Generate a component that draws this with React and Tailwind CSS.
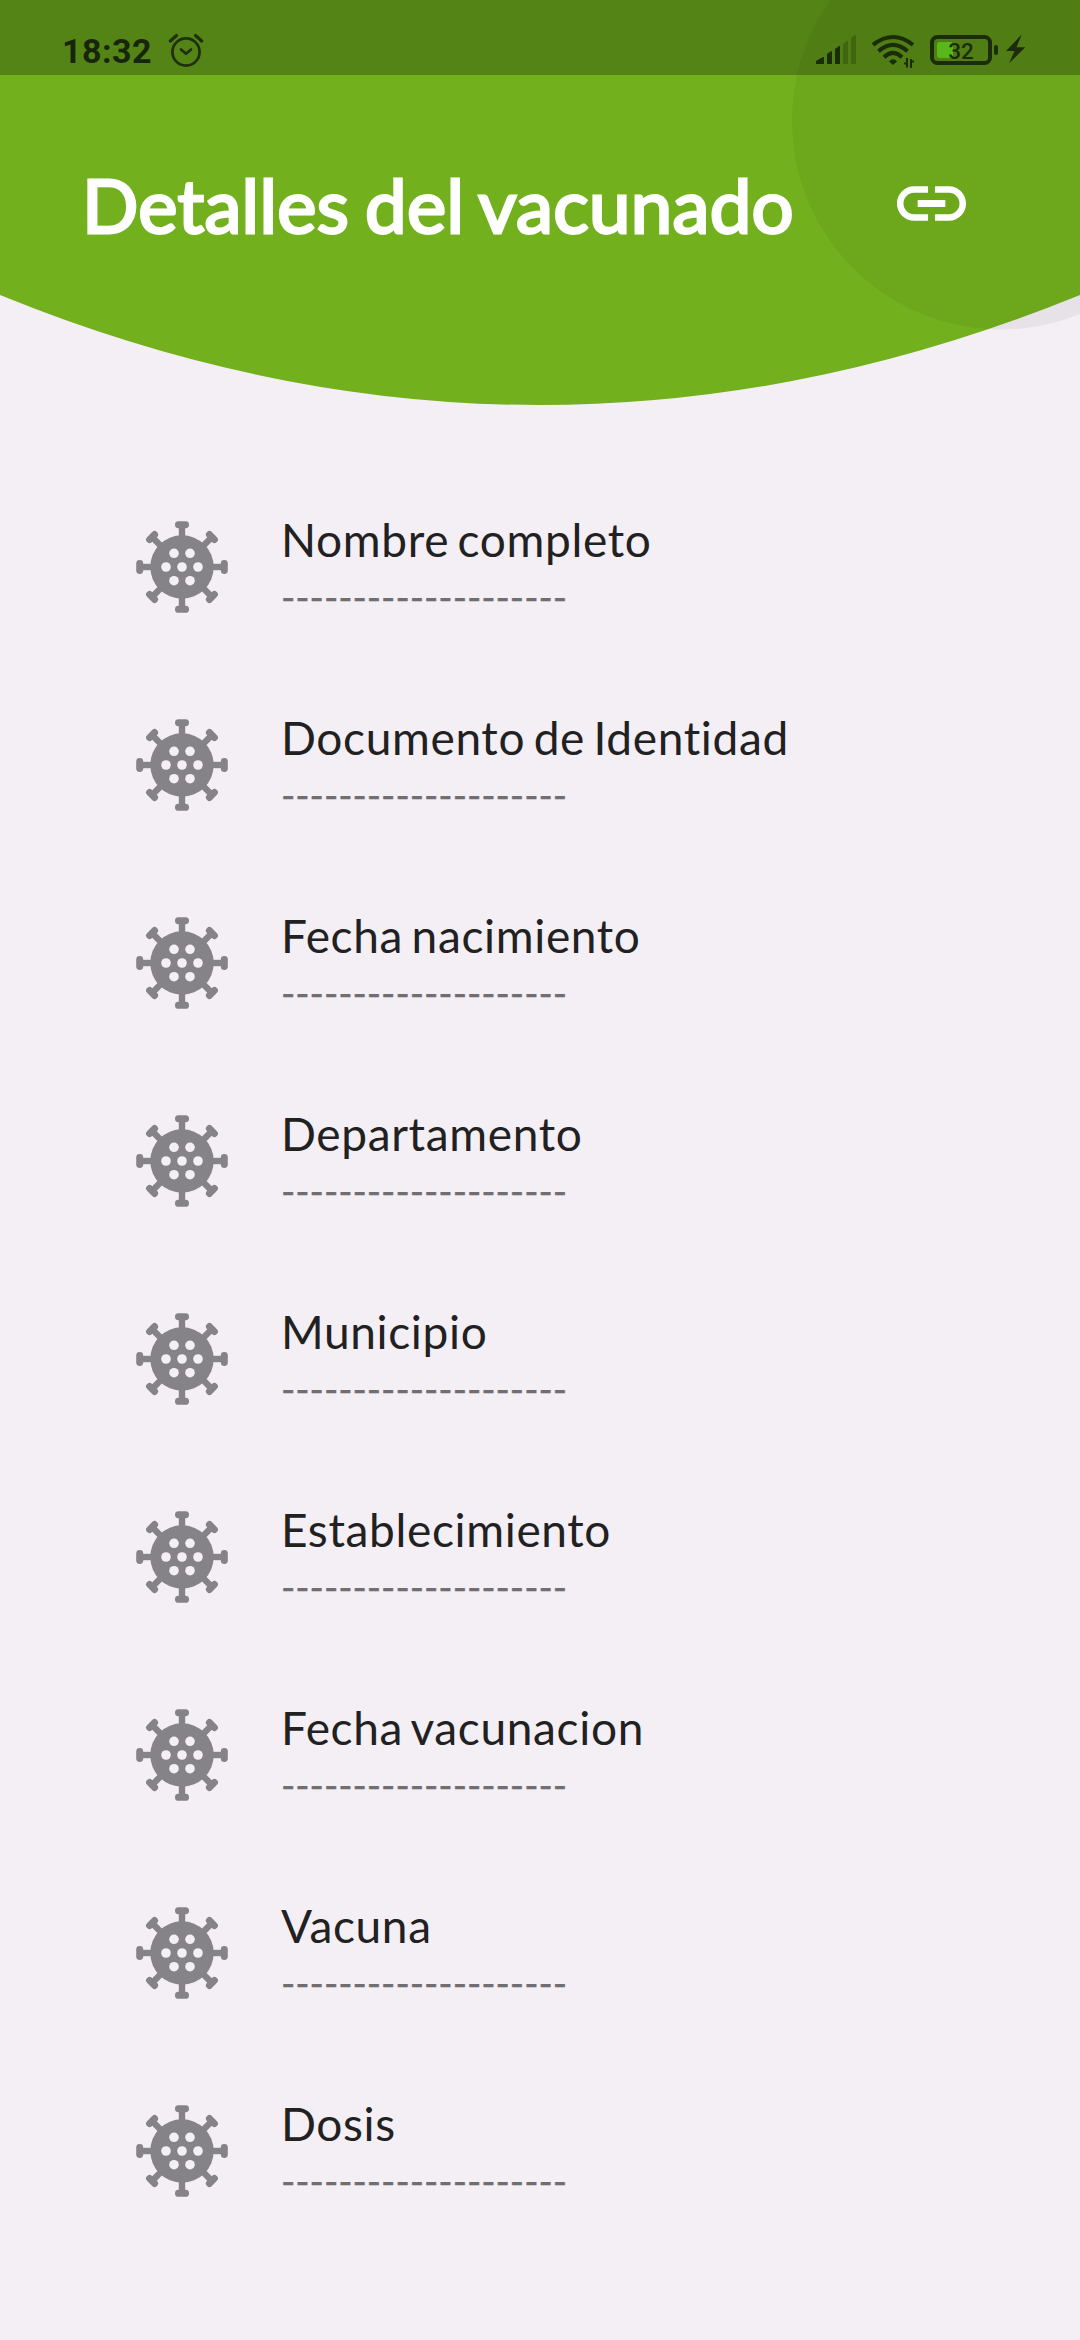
const FIELDS = [
  "Nombre completo",
  "Documento de Identidad",
  "Fecha nacimiento",
  "Departamento",
  "Municipio",
  "Establecimiento",
  "Fecha vacunacion",
  "Vacuna",
  "Dosis",
];

const SPIKES = [0, 45, 90, 135, 180, 225, 270, 315];
const PORES = [
  [-8, -13.7],
  [8, -13.7],
  [-16, 0],
  [0, 0],
  [16, 0],
  [-8, 13.7],
  [8, 13.7],
];

function VirusIcon() {
  return (
    <svg viewBox="-46 -46 92 92" className="h-[92px] w-[92px] shrink-0">
      <g fill="#868388">
        <circle r="31.7" />
        {SPIKES.map((angle) => (
          <g key={angle} transform={`rotate(${angle})`}>
            <rect x="-3.2" y="-41" width="6.4" height="14" />
            <rect x="-7" y="-45.8" width="14" height="7" rx="3.4" />
          </g>
        ))}
      </g>
      {PORES.map(([x, y]) => (
        <circle key={`${x},${y}`} cx={x} cy={y} r="4.8" fill="#f4eff5" />
      ))}
    </svg>
  );
}

function AlarmIcon() {
  return (
    <svg viewBox="168 32 36 36" className="ml-[17px] h-9 w-9" fill="none" stroke="#1d300a" strokeLinecap="round" strokeLinejoin="round">
      <circle cx="186" cy="52" r="13.6" strokeWidth="2.7" />
      <path d="M181 49.5l5 4.3 5-4.3" strokeWidth="2.7" />
      <path d="M170.3 41l6.2-5.5M201.7 41l-6.2-5.5" strokeWidth="3.2" />
    </svg>
  );
}

function SignalIcon() {
  return (
    <svg viewBox="816 34 40 31" className="h-[31px] w-10" fill="#1b2c09">
      <path d="M816 64v-2.2q0-1 1-1.5l6-3.3h1v7z" />
      <path d="M827 64V54l4-2.8h1V64z" />
      <path d="M835 64V49l4-3h1v18z" />
      <g fill="#406612">
        <path d="M843 64V44l4-3h1v23z" />
        <path d="M851 64V38l4-3h1v29z" />
      </g>
    </svg>
  );
}

function WifiIcon() {
  return (
    <svg viewBox="872 34 44 35" className="ml-4 h-[35px] w-11" fill="none" stroke="#1b2c09" strokeWidth="4">
      <path d="M873 44.8Q893 29.2 913 44.8" />
      <path d="M878.5 51.2Q893 38.6 907.5 51.2" />
      <path d="M884 57.2Q893 48.6 902 57.2" />
      <path d="M889 61.5Q893 57 897 61.5L893 65z" fill="#1b2c09" stroke="none" />
      <path d="M904 63.5h3V58M907 58v9.5M911 68v-9M911 61.5h3" strokeWidth="2" />
    </svg>
  );
}

function BatteryIcon() {
  return (
    <svg viewBox="930 34 68 32" className="ml-[14px] h-8 w-[68px]">
      <rect x="937" y="42" width="16" height="16" rx="2.5" fill="#58b819" />
      <rect x="932" y="37" width="58" height="26" rx="5.5" fill="none" stroke="#1b2c09" strokeWidth="4" />
      <rect x="994" y="45" width="4" height="10" rx="2" fill="#1b2c09" />
      <text x="961" y="59.2" textAnchor="middle" fontFamily="Roboto, sans-serif" fontWeight="500" fontSize="22.5" fill="#1b2c09">
        32
      </text>
    </svg>
  );
}

function BoltIcon() {
  return (
    <svg viewBox="1006 35 20 30" className="ml-2 h-[30px] w-5" fill="#1b2c09">
      <path d="M1021.7 35.5L1006 52h8.4L1009.2 64.2 1025.3 48.3h-8.8z" />
    </svg>
  );
}

function StatusBar() {
  return (
    <div className="flex h-[75px] items-start justify-between bg-black/25 pl-[62px] pr-[54px]">
      <div className="flex items-start pt-8">
        <span className="mt-[-1px] w-[89px] whitespace-nowrap font-['Roboto'] text-[34px] font-bold leading-10 tracking-[0.5px] text-[#17250a]">
          18:32
        </span>
        <AlarmIcon />
      </div>
      <div className="flex items-start pt-[34px]">
        <SignalIcon />
        <WifiIcon />
        <BatteryIcon />
        <BoltIcon />
      </div>
    </div>
  );
}

function Header() {
  return (
    <header className="relative h-[405px] w-full">
      <svg viewBox="0 0 1080 405" className="absolute inset-0 h-[405px] w-[1080px]">
        <path d="M0 0H1080V295Q540 515 0 295z" fill="#72b01e" />
        <circle cx="1001" cy="120.5" r="209" fill="#000" fillOpacity="0.05" />
      </svg>
      <div className="relative">
        <StatusBar />
        <div className="flex items-start justify-between pl-[82px] pr-[107px] pt-[84px]">
          <h1 className="whitespace-nowrap font-['Lato'] text-[74.25px] font-normal leading-[92px] tracking-[0.3px] text-white [-webkit-text-stroke:2.8px_white] [word-spacing:-3.5px]">
            Detalles del vacunado
          </h1>
          <svg viewBox="0 0 24 24" className="mt-[3px] h-[83px] w-[83px]" fill="#fff">
            <path d="M3.9 12c0-1.71 1.39-3.1 3.1-3.1h4V7H7c-2.76 0-5 2.24-5 5s2.24 5 5 5h4v-1.9H7c-1.71 0-3.1-1.39-3.1-3.1zM8 13h8v-2H8v2zm9-6h-4v1.9h4c1.71 0 3.1 1.39 3.1 3.1s-1.39 3.1-3.1 3.1h-4V17h4c2.76 0 5-2.24 5-5s-2.24-5-5-5z" />
          </svg>
        </div>
      </div>
    </header>
  );
}

export default function App() {
  return (
    <div className="flex h-[2340px] w-[1080px] flex-col overflow-hidden bg-[#f4eff5] font-['Lato'] [font-variant-ligatures:none]">
      <Header />
      <ul className="flex flex-col pt-[63px]">
        {FIELDS.map((label) => (
          <li key={label} className="flex h-[198px] items-center gap-[53px] pl-[136px]">
            <VirusIcon />
            <div className="flex flex-col pb-px pt-[3px]">
              <span className="whitespace-nowrap text-[46px] leading-[56px] tracking-[0.65px] text-[#212121] [word-spacing:-3.9px]">{label}</span>
              <span className="whitespace-nowrap text-[38.5px] leading-[56px] text-[#706e71] [-webkit-text-stroke:0.4px_#706e71]">
                --------------------
              </span>
            </div>
          </li>
        ))}
      </ul>
    </div>
  );
}
